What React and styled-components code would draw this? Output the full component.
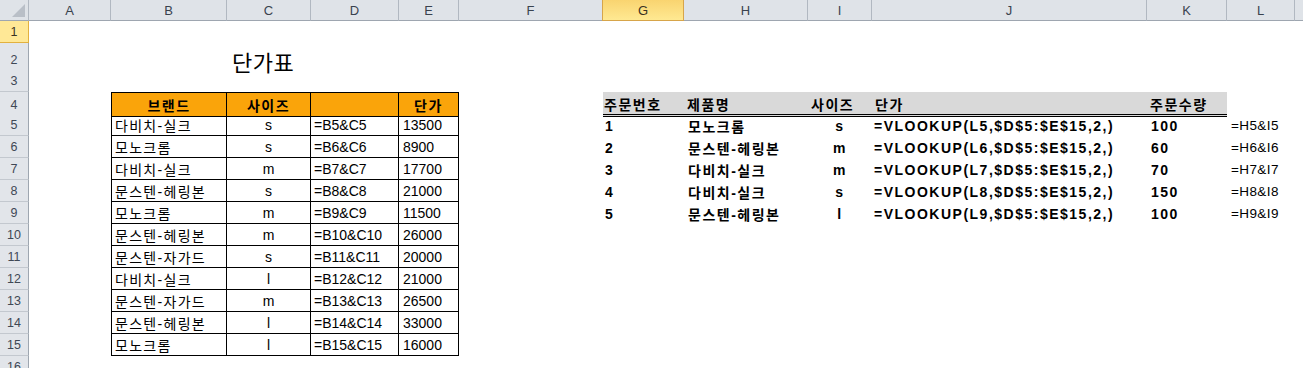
import styled, { createGlobalStyle } from "styled-components";

const GlobalStyle = createGlobalStyle`
  html, body {
    margin: 0;
    padding: 0;
    background: #fff;
    overflow: hidden;
  }
`;

// column widths in px: row header, A..M (M runs past the window edge)
const COLS = [29, 82, 116, 84, 88, 60, 144, 81, 124, 64, 275, 80, 68, 68];
const LETTERS = "ABCDEFGHIJKLM".split("");
const ROW_HEIGHTS = { 2: 27 };
const ROWS = Array.from({ length: 16 }, (_, i) => i + 1);

const LEFT_COLS = ["B", "C", "D", "E"];
const LEFT_HEAD = ["브랜드", "사이즈", "", "단가"];
const PRICES = [
  ["다비치-실크", "s", "=B5&C5", "13500"],
  ["모노크롬", "s", "=B6&C6", "8900"],
  ["다비치-실크", "m", "=B7&C7", "17700"],
  ["문스텐-헤링본", "s", "=B8&C8", "21000"],
  ["모노크롬", "m", "=B9&C9", "11500"],
  ["문스텐-헤링본", "m", "=B10&C10", "26000"],
  ["문스텐-자가드", "s", "=B11&C11", "20000"],
  ["다비치-실크", "l", "=B12&C12", "21000"],
  ["문스텐-자가드", "m", "=B13&C13", "26500"],
  ["문스텐-헤링본", "l", "=B14&C14", "33000"],
  ["모노크롬", "l", "=B15&C15", "16000"],
];

const RIGHT_COLS = ["G", "H", "I", "J", "K"];
const RIGHT_HEAD = ["주문번호", "제품명", "사이즈", "단가", "주문수량"];
const ORDERS = [
  ["1", "모노크롬", "s", "L5", "100"],
  ["2", "문스텐-헤링본", "m", "L6", "60"],
  ["3", "다비치-실크", "m", "L7", "70"],
  ["4", "다비치-실크", "s", "L8", "150"],
  ["5", "문스텐-헤링본", "l", "L9", "100"],
];

const isKorean = (s) => /[\uAC00-\uD7A3]/.test(s);

const Sheet = styled.div`
  width: 1303px;
  height: 368px;
  overflow: hidden;
  background: #fff;
  font-family: "Liberation Sans", "Noto Sans CJK KR", sans-serif;
  color: #000;
`;

const Row = styled.div`
  display: grid;
  grid-template-columns: ${COLS.map((w) => `${w}px`).join(" ")};
  height: ${(p) => p.$h}px;
`;

const Corner = styled.div`
  position: relative;
  box-sizing: border-box;
  background: #dfe3e8;
  border-right: 1px solid #b1b8c1;
  border-bottom: 1px solid #9ea6b0;

  &::after {
    content: "";
    position: absolute;
    right: 3px;
    bottom: 3px;
    width: 13px;
    height: 13px;
    background: #b9bfc7;
    clip-path: polygon(100% 0, 100% 100%, 0 100%);
  }
`;

const ColHead = styled.div`
  box-sizing: border-box;
  display: flex;
  align-items: center;
  justify-content: center;
  font-size: 13px;
  color: ${(p) => (p.$active ? "#3a3222" : "#39424e")};
  background: ${(p) =>
    p.$active ? "linear-gradient(#f9d470, #ffe992)" : "#dfe3e8"};
  border-right: 1px solid ${(p) => (p.$active ? "#d7a54a" : "#b1b8c1")};
  border-left: ${(p) => (p.$active ? "1px solid #d7a54a" : "none")};
  border-bottom: 1px solid ${(p) => (p.$active ? "#d7a54a" : "#9ea6b0")};
  margin-left: ${(p) => (p.$active ? "-1px" : "0")};
`;

const RowHead = styled.div`
  box-sizing: border-box;
  display: flex;
  align-items: center;
  justify-content: center;
  padding-top: 1px;
  font-size: 12.5px;
  color: ${(p) => (p.$active ? "#3a3222" : "#3f4855")};
  background: ${(p) => (p.$active ? "#ffe896" : "#e2e5ea")};
  border-right: 1px solid ${(p) => (p.$active ? "#e2b13f" : "#9ea6b0")};
  border-bottom: 1px solid ${(p) => (p.$active ? "#e2b13f" : "#c3c8cf")};
  margin-top: ${(p) => (p.$active ? "-1px" : "0")};
  border-top: ${(p) => (p.$active ? "1px solid #e2b13f" : "none")};
`;

const Cell = styled.div`
  box-sizing: border-box;
  display: flex;
  align-items: center;
  justify-content: ${(p) => (p.$align === "center" ? "center" : "flex-start")};
  padding: 1px ${(p) => p.$pad ?? 3}px 0;
  min-width: 0;
  white-space: nowrap;
  font-size: 14px;
  letter-spacing: ${(p) => (p.$ko ? "1.3px" : "0")};
`;

const Title = styled(Cell)`
  font-size: 22px;
  letter-spacing: 0.5px;
  padding-left: 5px;
  padding-top: 2px;
`;

const PriceCell = styled(Cell)`
  border-right: 1px solid #000;
  border-bottom: 1px solid #000;
  border-left: ${(p) => (p.$first ? "1px solid #000" : "none")};
`;

const PriceHead = styled(PriceCell)`
  border-top: 1px solid #000;
  background: #faa40a;
  font-weight: bold;
  letter-spacing: 1.5px;
`;

const OrderHead = styled(Cell)`
  background: #d9d9d9;
  border-bottom: 3px double #000;
  font-weight: bold;
  letter-spacing: 1.5px;
  padding-top: 2px;
`;

const OrderCell = styled(Cell)`
  font-weight: bold;
  letter-spacing: 1.5px;
`;

const LinkCell = styled(Cell)`
  font-size: 13.5px;
  letter-spacing: 0.4px;
`;

function cellAt(r, col) {
  const key = col + r;
  if (r === 2 && col === "C") return <Title key={key}>단가표</Title>;

  const li = LEFT_COLS.indexOf(col);
  if (li >= 0 && r === 4) {
    return (
      <PriceHead key={key} $first={li === 0} $align="center">
        {LEFT_HEAD[li]}
      </PriceHead>
    );
  }
  if (li >= 0 && r >= 5 && r <= 15) {
    const v = PRICES[r - 5][li];
    return (
      <PriceCell
        key={key}
        $first={li === 0}
        $align={li === 1 ? "center" : "left"}
        $pad={li === 3 ? 4 : 3}
        $ko={isKorean(v)}
      >
        {v}
      </PriceCell>
    );
  }

  const ri = RIGHT_COLS.indexOf(col);
  if (ri >= 0 && r === 4) {
    return (
      <OrderHead key={key} $pad={ri === 0 ? 1 : 3}>
        {RIGHT_HEAD[ri]}
      </OrderHead>
    );
  }
  if (r >= 5 && r <= 9) {
    const o = ORDERS[r - 5];
    if (ri === 3) {
      return (
        <OrderCell key={key} $pad={2}>
          {`=VLOOKUP(${o[3]},$D$5:$E$15,2,)`}
        </OrderCell>
      );
    }
    if (ri >= 0) {
      return (
        <OrderCell key={key} $align={ri === 2 ? "center" : "left"} $pad={ri === 0 ? 2 : 4}>
          {o[ri]}
        </OrderCell>
      );
    }
    if (col === "L") {
      return (
        <LinkCell key={key} $pad={4}>
          {`=H${r}&I${r}`}
        </LinkCell>
      );
    }
  }
  return <Cell key={key} />;
}

export default function App() {
  return (
    <>
      <GlobalStyle />
      <Sheet>
        <Row $h={21}>
          <Corner />
          {LETTERS.map((l) => (
            <ColHead key={l} $active={l === "G"}>
              {l}
            </ColHead>
          ))}
        </Row>
        {ROWS.map((r) => (
          <Row key={r} $h={ROW_HEIGHTS[r] ?? 22}>
            <RowHead $active={r === 1}>{r}</RowHead>
            {LETTERS.map((l) => cellAt(r, l))}
          </Row>
        ))}
      </Sheet>
    </>
  );
}
